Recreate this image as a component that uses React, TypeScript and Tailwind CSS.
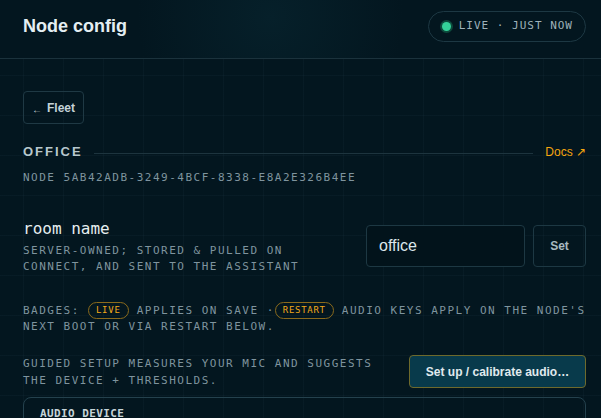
import React from "react";

const mono = "font-['DejaVu_Sans_Mono',monospace]";
const sans = "font-['Liberation_Sans',Arial,sans-serif]";

const Badge = ({ label }: { label: string }) => (
  <span
    className={`${mono} inline-block align-middle rounded-full border border-[#8a6a1c] px-[7px] text-[9px] leading-[15px] tracking-[0.08em] text-[#f0a81a] -mt-[2px]`}
  >
    {label}
  </span>
);

export default function App() {
  return (
    <div className={`${sans} flex h-screen w-full flex-col overflow-hidden bg-[#03161f] text-[#dce7eb]`}>
      {/* Header */}
      <header className="flex h-[59px] shrink-0 items-start justify-between border-b border-[#1b323c] bg-[radial-gradient(circle_at_45%_30%,#06202a_0%,#03161f_40%)] pl-[23px] pr-[15px] pt-[11px]">
        <h1 className="mt-[4px] text-[18px] font-bold leading-[22px] text-[#e4eef2]">
          Node config
        </h1>
        <div className="flex h-[31px] items-center gap-[6px] rounded-full border border-[#1d3843] pl-[11px] pr-[12px]">
          <span className="flex h-[13px] w-[13px] items-center justify-center rounded-full bg-[#0d4a3c]">
            <span className="h-[9px] w-[9px] rounded-full bg-[#34d399]" />
          </span>
          <span className={`${mono} text-[11px] tracking-[1px] text-[#9fb2ba]`}>
            LIVE · JUST NOW
          </span>
        </div>
      </header>

      {/* Main */}
      <main className="flex-1 bg-[linear-gradient(rgba(120,170,190,0.04)_1px,transparent_1px),linear-gradient(90deg,rgba(120,170,190,0.04)_1px,transparent_1px)] bg-[size:40px_40px] bg-[position:23px_16px] pl-[23px] pr-[15px] pt-[32px]">
        <button className="flex h-[33px] items-center gap-[5px] rounded-[4px] border border-[#1f3944] px-[8px] text-[12px] font-bold text-[#c5d3d8]">
          <span className="mt-[3px] text-[10px]">←</span>
          <span>Fleet</span>
        </button>

        <div className="mt-[19px] flex items-center">
          <span className="text-[13px] font-bold leading-[16px] tracking-[2px] text-[#b7c7cd]">
            OFFICE
          </span>
          <span className="ml-[11px] mr-[12px] mt-[3px] h-px flex-1 bg-[#1d343e]" />
          <span className="text-[12px] text-[#f5a50f]">Docs ↗</span>
        </div>

        <div className={`${mono} mt-[9px] text-[11px] leading-[16px] tracking-[1.5px] text-[#7f949e]`}>
          NODE 5AB42ADB-3249-4BCF-8338-E8A2E326B4EE
        </div>

        <div className="mt-[33px] flex items-start justify-between">
          <div>
            <div className={`${mono} text-[16px] leading-[20px] text-[#e6eef0]`}>room name</div>
            <div className={`${mono} mt-[4px] w-[320px] text-[11px] leading-[16px] tracking-[1.5px] text-[#7f949e]`}>
              SERVER-OWNED; STORED &amp; PULLED ON CONNECT, AND SENT TO THE ASSISTANT
            </div>
          </div>
          <div className="mt-[6px] flex gap-[8px]">
            <div className="flex h-[42px] w-[159px] items-center rounded-[4px] border border-[#1d3843] bg-[#02131b] px-[12px] text-[16px] text-[#dce7eb]">
              office
            </div>
            <button className="h-[42px] w-[53px] rounded-[4px] border border-[#1d3843] text-[12px] font-bold text-[#a9bac1]">
              Set
            </button>
          </div>
        </div>

        <p className={`${mono} mt-[28px] text-[11px] leading-[16px] tracking-[1.5px] text-[#7f949e]`}>
          BADGES: <Badge label="LIVE" /> APPLIES ON SAVE ·<Badge label="RESTART" /> AUDIO KEYS APPLY ON THE NODE'S NEXT BOOT OR VIA RESTART BELOW.
        </p>

        <div className="mt-[20px] flex items-start justify-between">
          <p className={`${mono} w-[360px] text-[11px] leading-[17px] tracking-[1.5px] text-[#7f949e]`}>
            GUIDED SETUP MEASURES YOUR MIC AND SUGGESTS THE DEVICE + THRESHOLDS.
          </p>
          <button className="h-[33px] w-[177px] rounded-[4px] border border-[#6e6a2c] bg-[#083a4b] text-[12px] font-bold text-[#e0eaee]">
            Set up / calibrate audio…
          </button>
        </div>

        <div className="mt-[8px] rounded-t-[8px] border border-[#24414d] px-[16px] pt-[9px] pb-[20px]">
          <div className={`${mono} text-[11px] font-bold leading-[14px] tracking-[0.4px] text-[#c5d3d8]`}>
            AUDIO DEVICE
          </div>
        </div>
      </main>
    </div>
  );
}
